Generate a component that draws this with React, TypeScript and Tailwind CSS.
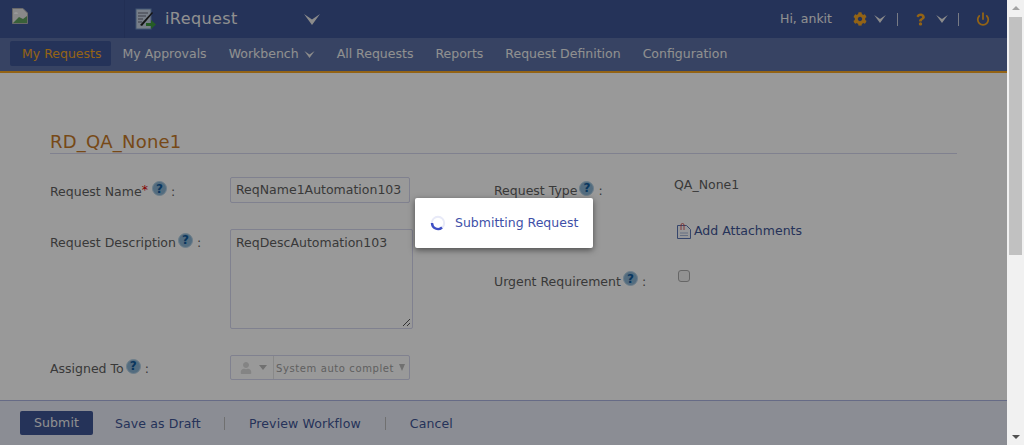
import { FaCog, FaQuestion, FaUser } from "react-icons/fa";
import { Power } from "lucide-react";

const Chevron = ({ className }: { className: string }) => (
  <svg viewBox="0 0 16 11" className={className} aria-hidden>
    <polygon points="0,0 8,5.5 16,0 8,11" fill="currentColor" />
  </svg>
);

const HelpDot = () => (
  <span className="inline-flex h-[15px] w-[15px] items-center justify-center rounded-full border border-[#b5d2e6] bg-[#8ab4d4] text-[12px] leading-none font-bold text-[#0f5a9c]">
    ?
  </span>
);

const FieldLabel = ({ text, required }: { text: string; required?: boolean }) => (
  <span className="flex items-center text-[12.5px] text-[#606060]">
    {text}
    {required && <span className="relative -top-[2px] mr-[2px] text-[#d00]">*</span>}
    <span className="relative -top-[3px] ml-[2px]">
      <HelpDot />
    </span>
    <span className="ml-[4px]">:</span>
  </span>
);

const BrokenImage = () => (
  <svg viewBox="0 0 16 16" className="h-[16px] w-[16px]" aria-hidden>
    <path d="M0.5 0.5H11L15.5 5V15.5H0.5Z" fill="#e4e4e4" stroke="#b0b0b0" />
    <path d="M1 15L7 9L11 11L15 8V15Z" fill="#5fa05f" />
    <path d="M2 6a2 2 0 0 1 4 0Z" fill="#fff" />
  </svg>
);

const AppIcon = () => (
  <svg viewBox="0 0 22 22" className="h-[22px] w-[22px]" aria-hidden>
    <rect x="1" y="1" width="15" height="20" fill="#c8d4e4" stroke="#6f8fc0" />
    <path d="M3 5h10M3 8h8M3 11h5M3 14h4" stroke="#667" strokeWidth="1" />
    <path d="M5 17L17 4l1 1L7 18Z" fill="#222" />
    <path d="M11 15h5v-3l5 4.500-5 4.500v-3h-5Z" fill="#3f9a3f" />
  </svg>
);

const AttachIcon = () => (
  <svg viewBox="0 0 14 16" className="h-[16px] w-[14px]" aria-hidden>
    <path d="M0.500 2.500H9.500L13.500 6.500V15.500H0.500Z" fill="#fafcff" stroke="#5a76b4" />
    <path d="M3 10h8M3 12.500h8" stroke="#a9b9da" />
    <path d="M4 7V2a1.500 1.500 0 0 1 3 0v5" fill="none" stroke="#d23a3a" strokeWidth="0.800" />
  </svg>
);

const Spinner = () => (
  <svg viewBox="0 0 16 16" className="h-[16px] w-[16px]" aria-hidden>
    <circle cx="8" cy="8" r="6.200" fill="none" stroke="#e8eaf8" strokeWidth="2" />
    <path d="M2 8a6 6 0 0 0 10 4.500" fill="none" stroke="#3f4fc4" strokeWidth="2.400" />
  </svg>
);

const navItems = ["My Approvals", "Workbench", "All Requests", "Reports", "Request Definition", "Configuration"];

export default function App() {
  return (
    <div className="relative flex h-[445px] w-[1024px] overflow-hidden bg-[#f1f1f1] font-['DejaVu_Sans','Liberation_Sans',sans-serif]">
      <div className="relative flex h-full w-[1007px] flex-col bg-white">
        <header className="flex h-[38px] items-center bg-[#3e5595] text-white">
          <div className="flex h-full w-[125px] items-start border-r border-[#3a4f8c] pt-[8px] pl-[12px]">
            <BrokenImage />
          </div>
          <div className="flex items-center pl-[10px]">
            <AppIcon />
            <span className="ml-[8px] w-[139px] text-[16px] tracking-[0.4px] text-[#f0f0f0]">iRequest</span>
            <Chevron className="h-[11px] w-[16px] text-[#e8e8e8]" />
          </div>
          <div className="ml-auto flex items-center pr-[17px] text-[12.5px] text-[#f0f0f0]">
            <span>Hi, ankit</span>
            <FaCog className="ml-[21px] h-[14px] w-[14px] text-[#f5a623]" />
            <Chevron className="ml-[7px] h-[8px] w-[12px] text-[#e8e8e8]" />
            <span className="ml-[11px] h-[13px] w-px bg-[#c8cede]" />
            <FaQuestion className="ml-[18px] h-[13px] w-[9px] text-[#f5a623]" />
            <Chevron className="ml-[11px] h-[8px] w-[12px] text-[#e8e8e8]" />
            <span className="ml-[10px] h-[13px] w-px bg-[#c8cede]" />
            <Power className="ml-[17px] h-[14px] w-[14px] text-[#f5a623]" strokeWidth={3} />
          </div>
        </header>

        <nav className="flex h-[35px] items-start gap-[1px] border-b-2 border-[#f5a623] bg-[#5c70a5] pt-[3px] pl-[10px] text-[12.5px] text-[#f0f0f0]">
          <span className="flex h-[25px] w-[101px] items-center rounded-[2px] bg-[#3e5595] pt-[2px] pl-[12px] text-[#f5a623]">My Requests</span>
          {navItems.map((item) => (
            <span key={item} className="flex h-[25px] items-center px-[10.500px] pt-[2px]">
              {item}
              {item === "Workbench" && <Chevron className="ml-[5px] h-[7px] w-[11px] text-[#e8e8e8]" />}
            </span>
          ))}
        </nav>

        <main className="flex-1 overflow-hidden px-[50px] pt-[58px]">
          <h1 className="border-b border-[#d5d7ef] text-[18px] leading-[22px] tracking-[0.2px] text-[#c77a28]">RD_QA_None1</h1>
          <div className="mt-[23px] flex">
            <div className="w-[444px]">
              <div className="flex h-[26px] items-center">
                <div className="w-[180px] pt-[4px]">
                  <FieldLabel text="Request Name" required />
                </div>
                <div className="flex h-[26px] w-[180px] items-center rounded-[2px] border border-[#d5d7ef] px-[5px] pt-[1px] text-[12.5px] whitespace-nowrap text-[#606060]">
                  ReqName1Automation103
                </div>
              </div>
              <div className="mt-[26px] flex items-start">
                <div className="w-[180px] pt-[5px]">
                  <FieldLabel text="Request Description" />
                </div>
                <div className="relative h-[100px] w-[183px] rounded-[2px] border border-[#d5d7ef] px-[5px] pt-[4px] text-[12.5px] text-[#606060]">
                  ReqDescAutomation103
                  <svg viewBox="0 0 9 9" className="absolute right-[1px] bottom-[1px] h-[9px] w-[9px]" aria-hidden>
                    <path d="M1 8L8 1M5 8L8 5" stroke="#555" />
                  </svg>
                </div>
              </div>
              <div className="mt-[26px] flex h-[25px] items-center">
                <div className="w-[180px] pt-[4px]">
                  <FieldLabel text="Assigned To" />
                </div>
                <div className="flex h-[25px] w-[180px] items-center rounded-[2px] border border-[#d5d7ef] text-[10px] tracking-[0.6px] text-[#a0a0a0]">
                  <div className="flex h-full w-[43px] items-center border-r border-[#e4e4e4] pl-[9px]">
                    <FaUser className="h-[12px] w-[12px] text-[#ddd]" />
                    <span className="ml-[7px] h-0 w-0 border-x-[4px] border-t-[5px] border-x-transparent border-t-[#bbb]" />
                  </div>
                  <span className="ml-[2px] whitespace-nowrap pt-[2px]">System auto complet</span>
                  <span className="ml-[5px] h-0 w-0 border-x-[3.500px] border-t-[7px] border-x-transparent border-t-[#bbb]" />
                </div>
              </div>
            </div>
            <div className="relative -mt-[1px]">
              <div className="flex">
                <div className="w-[180px] pt-[6px]">
                  <FieldLabel text="Request Type" />
                </div>
                <span className="text-[12.5px] text-[#606060]">QA_None1</span>
              </div>
              <div className="mt-[21px] ml-[183px] flex items-center gap-[3px] text-[12.5px] text-[#3e5595]">
                <AttachIcon />
                Add Attachments
              </div>
              <div className="mt-[32px] flex items-start">
                <div className="w-[184px]">
                  <FieldLabel text="Urgent Requirement" />
                </div>
                <span className="-mt-[3px] h-[12px] w-[12px] rounded-[3px] border border-[#aaa] bg-[#f4f4f4]" />
              </div>
            </div>
          </div>
        </main>

        <footer className="flex h-[45px] items-center border-t border-[#aab2e0] bg-[#e8ebf7] pl-[20px] text-[12.5px] tracking-[0.12px] text-[#3e5595]">
          <span className="flex h-[24px] w-[73px] items-center justify-center rounded-[2px] bg-[#3e5595] pt-[1px] text-[#f0f0f0]">Submit</span>
          <span className="ml-[22px] pt-[2px]">Save as Draft</span>
          <span className="ml-[23px] h-[13px] w-px bg-[#bbb]" />
          <span className="ml-[24px] pt-[2px]">Preview Workflow</span>
          <span className="ml-[24px] h-[13px] w-px bg-[#bbb]" />
          <span className="ml-[24px] pt-[2px]">Cancel</span>
        </footer>

        <div className="absolute inset-0 bg-black/40" />
        <div className="absolute top-[198px] left-[415px] flex h-[50px] w-[178px] items-center rounded-[2px] bg-white pl-[15px] text-[12.5px] text-[#4050a8] shadow-[0_2px_6px_rgba(0,0,0,0.5)]">
          <Spinner />
          <span className="ml-[9px] whitespace-nowrap">Submitting Request</span>
        </div>
      </div>

      <div className="flex w-[17px] flex-col items-center bg-[#f1f1f1]">
        <span className="mt-[6px] h-0 w-0 border-x-[4px] border-b-[4px] border-x-transparent border-b-[#a3a3a3]" />
        <div className="mt-[7px] h-[238px] w-[13px] bg-[#c1c1c1]" />
        <span className="mt-auto mb-[6px] h-0 w-0 border-x-[4px] border-t-[4px] border-x-transparent border-t-[#505050]" />
      </div>
    </div>
  );
}
